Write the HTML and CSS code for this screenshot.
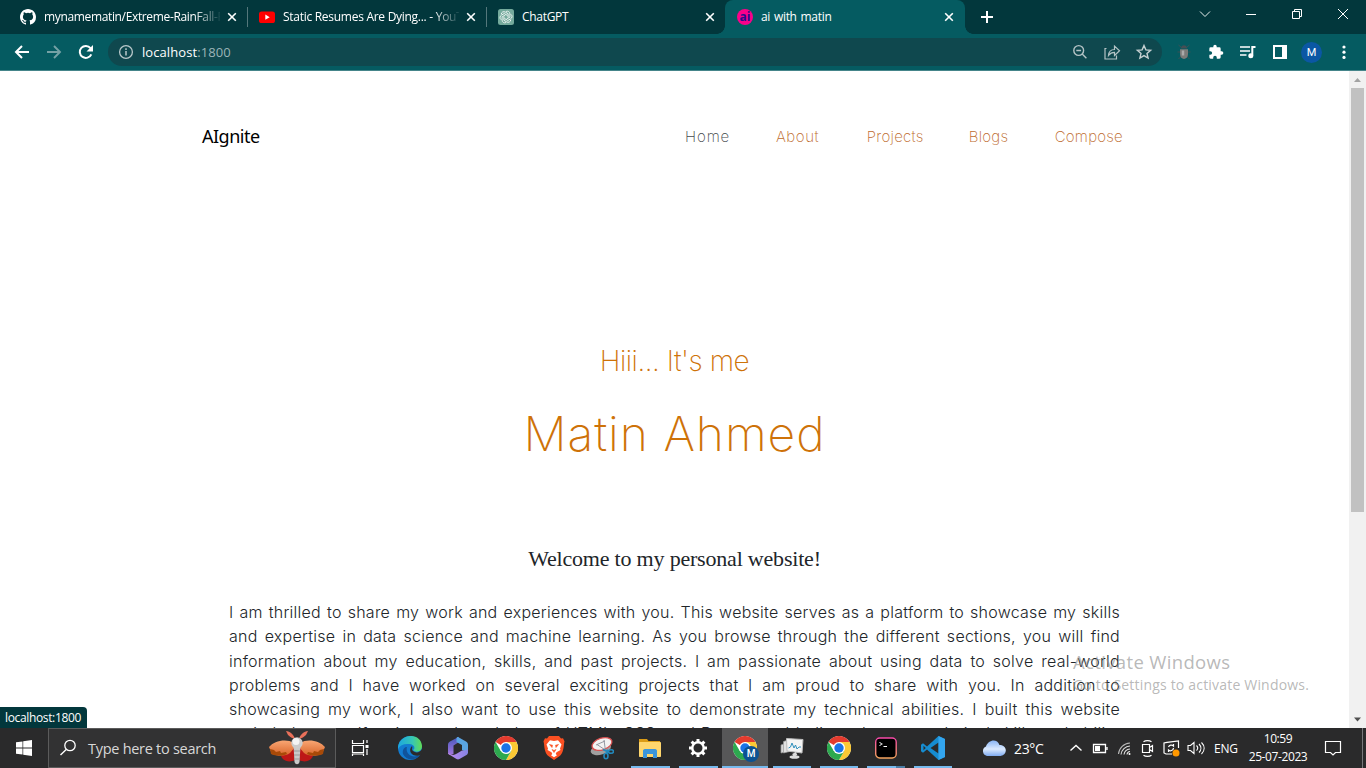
FILE: index.html
```html
<!DOCTYPE html>
<html lang="en">
<head>
<meta charset="utf-8">
<title>ai with matin</title>
<link rel="stylesheet" href="styles.css">
</head>
<body>
<svg width="0" height="0" class="defs">
  <defs>
    <symbol id="x" viewBox="0 0 16 16"><path d="M4.2 4.2l7.6 7.6M11.8 4.2l-7.6 7.6" stroke="#fff" stroke-width="1.6" fill="none"/></symbol>
    <symbol id="chrome" viewBox="0 0 24 24">
      <circle cx="12" cy="12" r="12" fill="#fff"/>
      <path d="M12 12L1.6 6A12 12 0 0 1 22.4 6H12z" fill="#e33b2e"/>
      <path d="M22.4 6A12 12 0 0 1 12 24l5.2-9L12 6z" fill="#fcc934"/>
      <path d="M1.6 6A12 12 0 0 0 12 24l5.2-9-10.4 0z" fill="#2da94f"/>
      <circle cx="12" cy="12" r="6" fill="#fff"/><circle cx="12" cy="12" r="4.7" fill="#1a73e8"/>
    </symbol>
  </defs>
</svg>
<div class="screen">
  <header class="tabstrip">
    <div class="tab">
      <svg class="fav" viewBox="0 0 16 16"><path fill="#fff" d="M8 0C3.58 0 0 3.58 0 8c0 3.54 2.29 6.53 5.47 7.59.4.07.55-.17.55-.38 0-.19-.01-.82-.01-1.49-2.01.37-2.53-.49-2.69-.94-.09-.23-.48-.94-.82-1.13-.28-.15-.68-.52-.01-.53.63-.01 1.08.58 1.23.82.72 1.21 1.87.87 2.33.66.07-.52.28-.87.51-1.07-1.78-.2-3.64-.89-3.64-3.95 0-.87.31-1.59.82-2.15-.08-.2-.36-1.02.08-2.12 0 0 .67-.21 2.2.82a7.6 7.6 0 0 1 4 0c1.53-1.04 2.2-.82 2.2-.82.44 1.1.16 1.92.08 2.12.51.56.82 1.27.82 2.15 0 3.07-1.87 3.75-3.65 3.95.29.25.54.73.54 1.48 0 1.07-.01 1.93-.01 2.2 0 .21.15.46.55.38A8 8 0 0 0 16 8c0-4.42-3.58-8-8-8z"/></svg>
      <span class="tab-title fade t1">mynamematin/Extreme-RainFall-Prediction</span>
      <svg class="close"><use href="#x"/></svg>
    </div>
    <div class="tab sep">
      <svg class="fav" viewBox="0 0 16 16"><rect y="2.5" width="16" height="11.5" rx="2.6" fill="#f00"/><path d="M6.3 5.6l4.4 2.6-4.4 2.6z" fill="#fff"/></svg>
      <span class="tab-title fade t2">Static Resumes Are Dying... - YouTube</span>
      <svg class="close"><use href="#x"/></svg>
    </div>
    <div class="tab sep">
      <svg class="fav" viewBox="0 0 16 16"><rect width="16" height="16" rx="2.5" fill="#74aa9c"/><g fill="none" stroke="#fff" stroke-width=".75"><path id="petal" d="M8 2.5c2-1 4 .5 3.9 2.5v3.2L8.6 10"/><use href="#petal" transform="rotate(60 8 8)"/><use href="#petal" transform="rotate(120 8 8)"/><use href="#petal" transform="rotate(180 8 8)"/><use href="#petal" transform="rotate(240 8 8)"/><use href="#petal" transform="rotate(300 8 8)"/></g></svg>
      <span class="tab-title t3">ChatGPT</span>
      <svg class="close"><use href="#x"/></svg>
    </div>
    <div class="tab active">
      <span class="fav ai">ai</span>
      <span class="tab-title t4">ai with matin</span>
      <svg class="close"><use href="#x"/></svg>
    </div>
    <svg class="plus" viewBox="0 0 14 14"><path d="M7 1v12M1 7h12" stroke="#fff" stroke-width="2"/></svg>
    <div class="wincontrols">
      <svg viewBox="0 0 46 28"><path d="M18 11.5l5 5 5-5" fill="none" stroke="#e8eeee"/></svg>
      <svg viewBox="0 0 46 28"><path d="M18 14.5h10" stroke="#fff"/></svg>
      <svg viewBox="0 0 46 28"><path d="M18.5 11.5h7v7h-7zM20.5 11.500v-2h7v7h-2" fill="none" stroke="#fff"/></svg>
      <svg viewBox="0 0 46 28"><path d="M18 9l10 10M28 9L18 19" stroke="#fff"/></svg>
    </div>
  </header>
  <div class="toolbar">
    <div class="navbtns">
      <svg viewBox="0 0 32 32"><path d="M29 16H16.500M22 10l-6 6 6 6" fill="none" stroke="#fff" stroke-width="2"/></svg>
      <svg viewBox="0 0 32 32"><path d="M15 16h12.500M22 10l6 6-6 6" fill="none" stroke="#75a1a5" stroke-width="1.900"/></svg>
      <svg viewBox="0 0 32 32"><path d="M27.300 18.300A6 6 0 1 1 26.500 12.200" fill="none" stroke="#fff" stroke-width="2"/><path d="M29 9v6.500h-6.500z" fill="#fff"/></svg>
    </div>
    <div class="omnibox">
      <svg class="info" viewBox="0 0 16 16"><circle cx="8" cy="8" r="6.400" fill="none" stroke="#b9c8ca" stroke-width="1.300"/><path d="M8 7v4.500M8 4.300v1.600" stroke="#b9c8ca" stroke-width="1.500"/></svg>
      <span class="url">localhost<i>:1800</i></span>
      <div class="omni-icons">
        <svg viewBox="0 0 32 28"><g fill="none" stroke="#b4c3c5" stroke-width="1.400"><circle cx="14.700" cy="12.500" r="4.900"/><path d="M18.200 16l4.200 4.200M12.300 12.500h4.800"/></g></svg>
        <svg viewBox="0 0 32 28"><g fill="none" stroke="#b4c3c5" stroke-width="1.200"><path d="M10.500 10.500h-1.500v10.500h11.500V17.500M12.500 17.500c.3-3.800 2.500-6 6-6V8.100l5 4.700-5 4.700v-3.100c-2.600 0-4.500 1-6 3.100z"/></g></svg>
        <svg viewBox="0 0 32 28"><path d="M16 7.600l1.900 4.300 4.700.4-3.600 3.100 1.100 4.600-4.100-2.400-4.100 2.400 1.100-4.600-3.600-3.100 4.700-.4z" fill="none" stroke="#c5d0d1" stroke-width="1.400"/></svg>
      </div>
    </div>
    <div class="actions">
      <svg viewBox="0 0 32 32"><path d="M10.500 9l3.500 3M21.500 9l-3.500 3M9.500 16h13M10.500 23l3-3M21.500 23l-3-3" stroke="#3d5155"/><path d="M13 12.500c0-4.500 6-4.500 6 0z" fill="#454f55"/><path d="M12 13.200h8V18c0 6.500-8 6.500-8 0z" fill="#7b7b79"/><path d="M15 14.500v5" stroke="#aaa" stroke-width="2.500"/></svg>
      <svg viewBox="0 0 24 24" class="puzzle"><path fill="#fff" d="M20.500 11H19V7a2 2 0 0 0-2-2h-4V3.500a2.500 2.500 0 0 0-5 0V5H4a2 2 0 0 0-2 2v3.800h1.500a2.700 2.700 0 0 1 0 5.400H2V20a2 2 0 0 0 2 2h3.800v-1.500a2.700 2.700 0 0 1 5.400 0V22H17a2 2 0 0 0 2-2v-4h1.500a2.500 2.500 0 0 0 0-5z"/></svg>
      <svg viewBox="0 0 32 32"><path d="M8 11h10M8 15h10M8 19h6.500" stroke="#fff" stroke-width="1.700"/><path d="M23.500 11h-3.200v8.500" fill="none" stroke="#fff" stroke-width="2"/><circle cx="18.800" cy="19.700" r="2.500" fill="#fff"/></svg>
      <svg viewBox="0 0 32 32"><path fill="#fff" fill-rule="evenodd" d="M9 9h14v14H9zM11 11v10h7V11z"/></svg>
      <span class="avatar">M</span>
      <svg viewBox="0 0 32 32"><g fill="#fff"><circle cx="17" cy="11" r="1.600"/><circle cx="17" cy="16.200" r="1.600"/><circle cx="17" cy="21.400" r="1.600"/></g></svg>
    </div>
  </div>
  <div class="viewport">
    <main class="page">
      <nav class="nav">
        <span class="brand">AIgnite</span>
        <span class="links"><a class="home">Home</a><a class="about">About</a><a class="projects">Projects</a><a class="blogs">Blogs</a><a class="compose">Compose</a></span>
      </nav>
      <h2 class="hi">Hiii... It's me</h2>
      <h1 class="name">Matin Ahmed</h1>
      <h3 class="welcome">Welcome to my personal website!</h3>
      <div class="intro">
        <div>I am thrilled to share my work and experiences with you. This website serves as a platform to showcase my skills</div>
        <div>and expertise in data science and machine learning. As you browse through the different sections, you will find</div>
        <div>information about my education, skills, and past projects. I am passionate about using data to solve real-world</div>
        <div>problems and I have worked on several exciting projects that I am proud to share with you. In addition to</div>
        <div>showcasing my work, I also want to use this website to demonstrate my technical abilities. I built this website</div>
        <div>entirely by myself, using my knowledge of HTML, CSS, and Bootstrap. I believe that my technical skills and ability</div>
      </div>
    </main>
    <aside class="scrollbar">
      <svg viewBox="0 0 17 17"><path d="M5 11l3.500-4 3.500 4z" fill="#a3a3a3"/></svg>
      <div class="thumb"></div>
      <svg viewBox="0 0 17 17"><path d="M5 6.500h7l-3.500 4z" fill="#505050"/></svg>
    </aside>
    <div class="watermark"><p>Activate Windows</p><p class="small">Go to Settings to activate Windows.</p></div>
    <div class="status">localhost:1800</div>
  </div>
  <footer class="taskbar">
    <div class="start"><svg viewBox="0 0 16 16"><path fill="#fff" d="M0 2.300L6.500 1.400v6.200H0zM7.200 1.300L16 0v7.600H7.200zM0 8.400h6.500v6.200L0 13.700zM7.200 8.400H16V16l-8.800-1.300z"/></svg></div>
    <div class="search">
      <svg class="lens" viewBox="0 0 18 18"><circle cx="11" cy="6.500" r="5.200" fill="none" stroke="#fff" stroke-width="1.300"/><path d="M7.200 10.400L1.500 16" stroke="#fff" stroke-width="1.400"/></svg>
      <span>Type here to search</span>
      <svg class="moth" viewBox="0 0 56 36"><defs><linearGradient id="wing" x2="0" y2="1"><stop stop-color="#f9a673"/><stop offset="1" stop-color="#d9652a"/></linearGradient></defs>
        <path d="M26 9C25 5 21 1 17 1l2 4c2 2 4 3 7 4zM30 9c1-4 5-8 9-8l-2 4c-2 2-4 3-7 4z" fill="#e9705a"/>
        <path d="M25 18L12 26c2 5 8 7 14 4zM31 18l13 8c-2 5-8 7-14 4z" fill="#bd1717"/>
        <path d="M25 13C17 8 5 11 0 17l3 7c7 3 14 2 18-1l5-6zM31 13c8-5 20-2 25 4l-3 7c-7 3-14 2-18-1l-5-6z" fill="url(#wing)"/>
        <path d="M1 19l4 1 2 2 4-1 1 2 5-1 1 2c-5 2-11 2-16 0zM55 19l-4 1-2 2-4-1-1 2-5-1-1 2c5 2 11 2 16 0z" fill="#a84a08"/>
        <path d="M24.500 16h7l-1 16c-1 3-4 3-5 0z" fill="#c9c9c9"/><path d="M25 21h6M25 25h6M25 29h6" stroke="#999"/><circle cx="28" cy="13" r="5.700" fill="#ccc"/><circle cx="27" cy="11.500" r="3.500" fill="#f4f4f4"/></svg>
    </div>
    <div class="apps">
      <div class="app tv"><svg viewBox="0 0 24 24"><path d="M4.500 4v3.500h11V4M4.500 9.500h11v7h-11zM4.500 20v-2h11v2M19 4v3M19 13v6" fill="none" stroke="#fff" stroke-width="1.200"/><rect x="17.500" y="9" width="3" height="3" fill="#fff"/></svg></div>
      <div class="app"><svg viewBox="0 0 24 24"><defs><linearGradient id="eg"><stop stop-color="#1ca6e0"/><stop offset=".6" stop-color="#36c6b4"/><stop offset="1" stop-color="#62dc54"/></linearGradient></defs><circle cx="12" cy="12" r="12" fill="#127bd0"/><path d="M0 11C2-3 23-4 24 10c0 6-6 7-9 4 3-2 1-6-4-6-5-.5-9 1-11 5z" fill="url(#eg)"/><path d="M9 11c-2 7 5 12 13 8-4 6-14 6-17-1-1-4 1-7 4-7z" fill="#10539b"/><path d="M14 10c1 2-1 3 1 5 3 2.500 7 1.500 9-2v4c-1 1.500-2 2-3 2.500-6 1.500-12-4-7-9.500z" fill="#2b2b2b"/></svg></div>
      <div class="app"><svg viewBox="0 0 24 24"><defs><linearGradient id="ma" x2="0" y2="1"><stop stop-color="#4658bd"/><stop offset="1" stop-color="#a376dc"/></linearGradient><linearGradient id="mb"><stop stop-color="#c08bf0"/><stop offset="1" stop-color="#8583e4"/></linearGradient></defs><path d="M13 .8L4 5.500C2.500 6.500 2 7.500 2 9v7c0 3 3 3.500 5.500 2V9.500L13 6z" fill="url(#ma)"/><path d="M12 1l8 4.500c1.500 1 2 2 2 3.500v8l-6-3V9L10.500 6V2.500c0-1 .5-1.500 1.500-1.500z" fill="#5aa5e2"/><path d="M2 16.500c0 1.500 1 2 2 2.500l6.500 4c1 .5 2 .5 3 0l7-4c1-.8 1.500-1.500 1.500-3V13c-1 1-4 1.500-6 1.500l-5 3c-3 2-6 2-9-1z" fill="url(#mb)"/></svg></div>
      <div class="app"><svg><use href="#chrome"/></svg></div>
      <div class="app"><svg viewBox="0 0 24 24"><path d="M7 0h10l2 2.500 2-.2 1.500 3-.5 2.500c-.5 7-2 10-4 12L12 24l-6-4.200C4 18 2.500 14.500 2 7.800l-.5-2.500 1.500-3 2 .2z" fill="#fb5022"/><path d="M8 4.300l4 .6 4-.6 3.500 4.200-1.500 4 .5 1.500-4 2.300-.8 1.700 1.300 1.300L12 21.300l-3-2 1.300-1.300-.8-1.700-4-2.300.5-1.500-1.500-4z" fill="#fff"/><path d="M7.500 8.500l3 .7-.5 2.300zM16.500 8.500l-3 .7.5 2.300zM10 13.500l2 1 2-1-2 3z" fill="#fb5022" stroke="#fb5022" stroke-width=".6"/></svg></div>
      <div class="app"><svg viewBox="0 0 24 24"><ellipse cx="10.500" cy="13" rx="10.500" ry="5.500" transform="rotate(-18 11 12)" fill="#a0a0a0"/><ellipse cx="12" cy="8" rx="10.300" ry="5.800" transform="rotate(-18 12 8)" fill="#f2f2f2" stroke="#d95050" stroke-width="1.300"/><path d="M7 8.500l9 6M14 4l1.500 11M6 9l9-4" stroke="#8a8f99" stroke-width=".9"/><g fill="none" stroke="#2389bd" stroke-width="1.600"><ellipse cx="16" cy="20" rx="2" ry="2.800"/><ellipse cx="21" cy="15.500" rx="2.500" ry="1.800"/><path d="M16.500 17.500l1-4M19 16.500l-6-3"/></g></svg></div>
      <div class="app"><svg viewBox="0 0 24 24"><path d="M1 3h8l1.500 2H22v4H1z" fill="#dc9c16"/><rect x="1" y="6" width="22" height="15" rx=".8" fill="#ffd66d"/><path d="M5 22v-7c0-1 .5-2 2-2h10c1.500 0 2 1 2 2v7h-4v-4H9v4z" fill="#3b95db"/></svg><b class="run"></b></div>
      <div class="app"><svg viewBox="0 0 24 24"><circle cx="12" cy="12" r="5.700" fill="none" stroke="#fff" stroke-width="2.400"/><g stroke="#fff" stroke-width="3"><path d="M12 3v3M12 18v3M3 12h3M18 12h3M5.600 5.600l2.200 2.200M16.200 16.200l2.200 2.200M5.600 18.400l2.200-2.200M16.200 7.800l2.200-2.200"/></g></svg><b class="run"></b></div>
      <div class="app narrow on"><svg><use href="#chrome"/></svg><em>M</em><b class="run"></b></div>
      <div class="app narrow"><svg viewBox="0 0 24 24"><path d="M1 9l8-3v9l-8 2z" fill="#d8d8d8" stroke="#999" stroke-width=".7"/><path d="M3.500 5.500l8-2.500v12l-8 2z" fill="#e2e2e2" stroke="#999" stroke-width=".7"/><path d="M6.500 2.500l16.500 1-1 13.500-15-2z" fill="#f4f4f4" stroke="#bbb"/><path d="M8.500 12l2-1 1.500-4 2 5 1.500-3 1.500 4 2-2h2" fill="none" stroke="#3190bd" stroke-width="1"/><path d="M14 17l1.500 3" stroke="#ddd" stroke-width="4"/><ellipse cx="14.500" cy="21" rx="5" ry="1.800" fill="#ddd"/></svg><b class="run"></b></div>
      <div class="app narrow"><svg><use href="#chrome"/></svg><b class="run"></b></div>
      <div class="app narrow"><svg viewBox="0 0 24 24"><defs><linearGradient id="jb" x2="0" y2="1"><stop stop-color="#f548a8"/><stop offset="1" stop-color="#f5a45d"/></linearGradient></defs><rect x="1.700" y="2" width="20.500" height="20" rx="4" fill="#000" stroke="url(#jb)" stroke-width="1.400"/><path d="M5.500 6l2 2-2 2M7 8h1.500M9.500 10.500h3.500" fill="none" stroke="#fff" stroke-width="1"/></svg><b class="run split"></b></div>
      <div class="app narrow"><svg viewBox="0 0 24 24"><path d="M17.500 0L24 3v18l-6.500 3L6 13.500l-4 3.300-2-1.500V8.700l2-1.500 4 3.300z" fill="#168cd0"/><path d="M17.500 6.500L9.500 12l8 5.500zM2.500 9.800v4.400L4.800 12z" fill="#2b2b2b"/><path d="M17.500 0L24 3v18l-6.500 3z" fill="#33a5ee"/></svg><b class="run"></b></div>
    </div>
    <div class="tray">
      <svg class="cloud" viewBox="0 0 24 17"><defs><linearGradient id="cl" x2="0" y2="1"><stop stop-color="#89b5f5"/><stop offset=".55" stop-color="#dbeaff"/><stop offset="1" stop-color="#7eaaf0"/></linearGradient></defs><path d="M5 16a5 5 0 0 1-1-9.500C6 0 15-2 17.500 5c8 0 8.500 10 1 11z" fill="url(#cl)"/></svg>
      <span class="temp">23°C</span>
      <svg class="ti up" viewBox="0 0 24 24"><path d="M6.500 14.500l5.500-5 5.500 5" fill="none" stroke="#fff" stroke-width="1.400"/></svg>
      <svg class="ti" viewBox="0 0 24 24"><path d="M5.500 8.500h12v8h-12zM19 11v3" fill="none" stroke="#fff" stroke-width="1.300"/><path d="M7 10h5v5H7z" fill="#fff"/></svg>
      <svg class="ti" viewBox="0 0 24 24"><g fill="none" stroke="#ddd" stroke-width="1.100"><path d="M6.500 18A12 12 0 0 1 18 7" opacity=".8"/><path d="M9 18.500A9.500 9.500 0 0 1 18 10M12 18.500a6.500 6.500 0 0 1 6-5.500M15 18.500a3.500 3.500 0 0 1 3-3"/></g><circle cx="17.500" cy="18" r="1" fill="#fff"/></svg>
      <svg class="ti" viewBox="0 0 24 24"><path d="M6.500 8.500h7v8h-7zM13.500 11.500l3-2v6l-3-2M7.500 5.800c2-1.500 6-1.500 8 0M7.500 19.200c2 1.500 6 1.500 8 0" fill="none" stroke="#fff" stroke-width="1.200"/></svg>
      <svg class="ti" viewBox="0 0 24 24"><path d="M18.500 12V5L7 6.300 4 7v10l2 1h6M8.500 11a3 3 0 0 1 5-1V8M13.500 12a3 3 0 0 1-5 2v2" fill="none" stroke="#fff" stroke-width="1.200"/><circle cx="16" cy="17" r="3.500" fill="#ff9800"/></svg>
      <svg class="ti" viewBox="0 0 24 24"><path d="M4 9.500h2.500l3.500-3v11l-3.500-3H4zM12.500 9.500c1.500 1.500 1.500 3.500 0 5M15 8c2.500 2.500 2.500 6 0 8.500M17.500 6.500c3.500 3.500 3.500 8 0 11.500" fill="none" stroke="#fff" stroke-width="1.100"/></svg>
      <span class="lang">ENG</span>
      <span class="clock"><span>10:59</span><span class="date">25-07-2023</span></span>
      <svg class="notif" viewBox="0 0 18 18"><path d="M1.500 2.500h15v11h-5L9 16l-2.500-2.500h-5z" fill="none" stroke="#fff" stroke-width="1.200"/></svg>
    </div>
    <div class="peek"></div>
  </footer>
</div>
</body>
</html>
```
FILE: styles.css
```css
* { box-sizing: border-box; }
body { margin: 0; font-family: "Open Sans", "Noto Sans", sans-serif; }
svg { display: block; flex: none; }
.defs { position: absolute; }
.screen { width: 1366px; height: 768px; overflow: hidden; display: flex; flex-direction: column; background: #fff; }

.tabstrip { height: 34px; flex: none; display: flex; background: #02373c; padding-left: 8px; }
.tab { position: relative; width: 239px; height: 34px; display: flex; align-items: center; padding-left: 12px; color: #fff; font-size: 12px; }
.tab.sep::before { content: ""; position: absolute; left: 0; top: 7px; width: 1px; height: 20px; background: #54777b; }
.tab.active { width: 240px; background: #055b61; border-radius: 8px 8px 0 0; }
.tab.active::before, .tab.active::after { content: ""; position: absolute; bottom: 0; width: 8px; height: 8px; }
.tab.active::before { left: -8px; background: radial-gradient(circle at 0 0, #02373c 7.5px, #055b61 8px); }
.tab.active::after { right: -8px; background: radial-gradient(circle at 100% 0, #02373c 7.5px, #055b61 8px); }
.fav { width: 16px; height: 16px; margin-right: 8px; flex: none; }
.ai { background: #fa008a; border-radius: 50%; color: #260d8c; font: bold 12px/15px "Open Sans", sans-serif; text-align: center; }
.tab-title { width: 176px; flex: none; overflow: hidden; white-space: nowrap; line-height: 18px; letter-spacing: -.3px; }
.t1 { letter-spacing: -.35px; }
.t2 { letter-spacing: -.28px; }
.t4 { word-spacing: 1px; }
.fade { -webkit-mask-image: linear-gradient(90deg, #000 150px, transparent 178px); mask-image: linear-gradient(90deg, #000 150px, transparent 178px); }
.close { width: 16px; height: 16px; margin-left: 4px; }
.plus { width: 14px; height: 14px; margin: 10px 0 0 15px; }
.wincontrols { display: flex; margin-left: auto; }
.wincontrols svg { width: 46px; height: 28px; }

.toolbar { height: 37px; flex: none; display: flex; align-items: flex-start; background: #055b61; border-bottom: 1px solid #45858a; }
.navbtns { display: flex; width: 108px; padding: 2px 0 0; }
.navbtns svg { width: 32px; height: 32px; }
.omnibox { width: 1054px; height: 28px; margin-top: 4px; border-radius: 14px; background: #0f484e; display: flex; align-items: center; padding-left: 10px; }
.info { width: 16px; height: 16px; margin-right: 8px; }
.url { color: #fff; font-size: 13px; line-height: 18px; letter-spacing: .08px; }
.url i { font-style: normal; color: #9bb4b7; }
.omni-icons { display: flex; margin-left: auto; padding-right: 2px; }
.omni-icons svg { width: 32px; height: 28px; }
.actions { display: flex; align-items: center; height: 36px; padding-left: 6px; }
.actions svg { width: 32px; height: 32px; }
.actions .puzzle { width: 16px; height: 16px; margin: 0 8px; }
.avatar { width: 21px; height: 21px; margin: 0 5px 0 5px; border-radius: 50%; background: #0b57a4; color: #fff; font: 11px/21px Roboto, sans-serif; text-align: center; }

.viewport { position: relative; flex: 1; min-height: 0; display: flex; overflow: hidden; }
.page { width: 1349px; overflow: hidden; font-family: Inter, "Open Sans", sans-serif; font-weight: 300; }
.nav { display: flex; justify-content: space-between; align-items: center; padding: 53px 226px 0 202px; height: 77px; }
.brand { font: 18px/24px "Noto Sans", sans-serif; color: #000; letter-spacing: -.5px; }
.links { display: flex; width: 438px; font-size: 15px; line-height: 24px; color: #bd6a2c; font-weight: 250; }
.links a { white-space: nowrap; letter-spacing: .25px; padding-top: 1px; }
.home { width: 91px; color: #43484c; }
.links .home { letter-spacing: .9px; }
.about { width: 91px; }
.links .about { letter-spacing: .6px; }
.projects { width: 102px; }
.blogs { width: 86px; }
h1, h2, h3 { margin: 0; text-align: center; font-weight: 200; white-space: nowrap; }
.hi { margin-top: 193px; font-size: 28px; line-height: 40px; letter-spacing: -.45px; color: #ce7208; font-weight: 250; }
.name { margin-top: 23px; font-size: 48px; line-height: 60px; letter-spacing: .95px; color: #ce7208; font-weight: 250; }
.welcome { margin-top: 79px; font: 400 22px/32px "Liberation Serif", serif; letter-spacing: -.2px; color: #212529; }
.intro { width: 891px; margin: 25px 0 0 229px; font-size: 16px; line-height: 24.3px; letter-spacing: .26px; color: #212529; font-weight: 280; }
.intro div { white-space: nowrap; text-align: justify; text-align-last: justify; }
.scrollbar { width: 17px; flex: none; background: #f1f1f1; display: flex; flex-direction: column; }
.scrollbar svg { width: 17px; height: 17px; }
.thumb { width: 13px; height: 424px; margin: 0 2px auto; background: #c1c1c1; }
.watermark { position: absolute; left: 1073px; top: 577px; color: rgba(145,145,145,.65); white-space: nowrap; }
.watermark p { margin: 0; font-size: 18.500px; line-height: 27px; letter-spacing: .35px; }
.watermark .small { font-size: 14px; line-height: 20px; letter-spacing: .19px; }
.status { position: absolute; left: 0; bottom: 0; width: 87px; height: 21px; padding-left: 5px; background: #02373c; color: #fff; border-radius: 0 4px 0 0; font-size: 12px; line-height: 21px; letter-spacing: -.35px; }

.taskbar { height: 40px; flex: none; display: flex; background: #2a2a2b; color: #fff; }
.start { width: 48px; display: flex; align-items: center; justify-content: center; }
.start svg { width: 16px; height: 16px; }
.search { position: relative; width: 288px; border: 1px solid #5b5b5b; background: #323233; display: flex; align-items: center; padding-left: 10px; font-size: 14.500px; letter-spacing: -.28px; color: #d8d8d8; }
.lens { width: 18px; height: 18px; margin-right: 11px; }
.search span { white-space: nowrap; width: 181px; }
.moth { width: 56px; height: 36px; }
.apps { display: flex; }
.app { position: relative; width: 48px; height: 40px; display: flex; align-items: center; justify-content: center; }
.app svg { width: 24px; height: 24px; }
.app.tv { width: 50px; justify-content: flex-start; padding-left: 12px; }
.app.narrow { width: 47px; }
.app.narrow.on { background: #575758; width: 46px; }
.app em { position: absolute; left: 21px; top: 18px; width: 16px; height: 16px; border-radius: 50%; background: #0b5293; font: 500 10px/16px Roboto, sans-serif; text-align: center; }
.run { position: absolute; left: 5px; right: 4px; bottom: 0; height: 2px; background: #76b9ed; }
.on .run { left: 0; right: 0; }
.split { background: linear-gradient(90deg, #76b9ed 76%, #4b7da5 76%); }
.tray { display: flex; align-items: center; margin-left: 26px; }
.cloud { width: 24px; height: 17px; }
.temp { font-size: 14px; width: 38px; padding-left: 8px; white-space: nowrap; letter-spacing: -.35px; }
.ti { width: 24px; height: 24px; }
.up { margin-left: 20px; }
.lang { width: 32px; padding-left: 6px; font-size: 12px; letter-spacing: -.2px; }
.clock { width: 74px; margin-left: 1px; display: flex; flex-direction: column; align-items: center; font-size: 12px; line-height: 18px; letter-spacing: -.4px; }
.notif { width: 18px; height: 18px; margin-left: 9px; }
.peek { margin-left: auto; width: 4px; border-left: 1px solid #77777a; }
```
